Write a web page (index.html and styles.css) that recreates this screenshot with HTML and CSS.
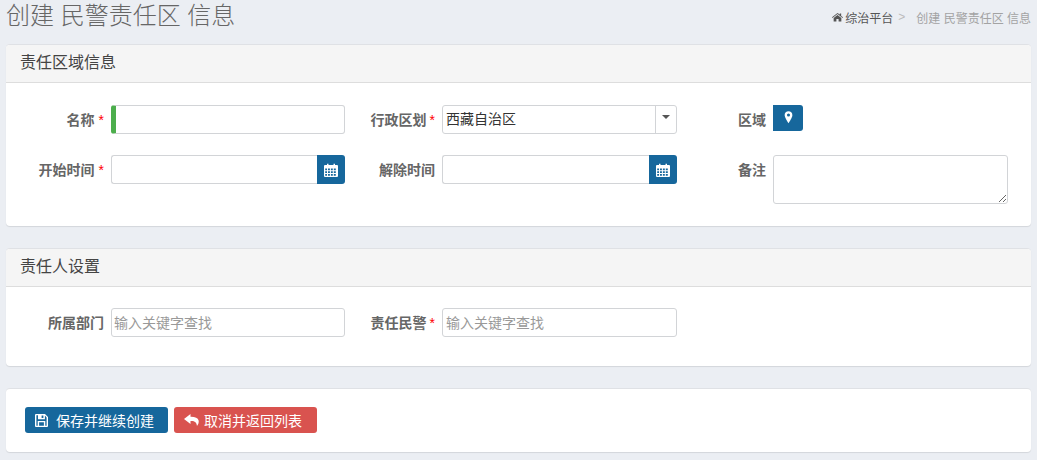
FILE: index.html
```html
<!DOCTYPE html>
<html lang="zh-CN">
<head>
<meta charset="utf-8">
<title>创建 民警责任区 信息</title>
<link rel="stylesheet" href="styles.css">
</head>
<body>
<div class="page">
  <header class="page-head">
    <h1 class="page-title">创建 民警责任区 信息</h1>
    <nav class="crumbs">
      <svg class="crumb-home" viewBox="0 0 12 10"><path d="M6 .6 0 5.400l.5.7L6 1.800l5.500 4.300.5-.7-2-1.600V1.200H8.500v1.200zM1.800 6v4h3V7.200h2.400V10h3V6L6 2.800z"/></svg>
      <a class="crumb-link">综治平台</a>
      <span class="crumb-sep">&gt;</span>
      <span class="crumb-current">创建 民警责任区 信息</span>
    </nav>
  </header>

  <section class="panel panel-area">
    <div class="panel-head">责任区域信息</div>
    <div class="form-grid">
      <label class="field-label">名称<span class="req">*</span></label>
      <input class="input input-valid" type="text">
      <label class="field-label field-label-mid">行政区划<span class="req req-tight">*</span></label>
      <div class="select">
        <span class="select-value">西藏自治区</span>
        <span class="select-arrow"><i class="caret"></i></span>
      </div>
      <label class="field-label">区域</label>
      <div class="map-cell">
        <button class="btn-map" type="button">
          <svg class="icon-pin" viewBox="0 0 10 14"><path fill-rule="evenodd" d="M5 0a4.300 4.300 0 0 0-4.300 4.400C.7 6.800 3.600 11 5 13.500c1.400-2.500 4.300-6.700 4.300-9.100A4.300 4.300 0 0 0 5 0zm0 6a1.700 1.700 0 1 1 0-3.400A1.700 1.700 0 0 1 5 6z"/></svg>
        </button>
      </div>

      <label class="field-label">开始时间<span class="req">*</span></label>
      <div class="date">
        <input class="input date-input" type="text">
        <span class="date-btn"><svg class="icon-cal" viewBox="0 0 14 14"><path fill-rule="evenodd" d="M1 2h2V.8h1.500V2h5V.8H11V2h2a1 1 0 0 1 1 1v10a1 1 0 0 1-1 1H1a1 1 0 0 1-1-1V3a1 1 0 0 1 1-1zm.2 3.500v1.700H3V5.500zm2.800 0v1.700h1.900V5.500zm2.900 0v1.700h1.900V5.500zm2.900 0v1.700h2V5.500zM1.200 8.200V10H3V8.200zm2.800 0V10h1.900V8.200zm2.900 0V10h1.900V8.200zm2.900 0V10h2V8.200zM1.200 11v1.800H3V11zM4 11v1.800h1.900V11zm2.900 0v1.800h1.900V11zm2.900 0v1.800h2V11z"/></svg></span>
      </div>
      <label class="field-label">解除时间</label>
      <div class="date">
        <input class="input date-input" type="text">
        <span class="date-btn"><svg class="icon-cal" viewBox="0 0 14 14"><path fill-rule="evenodd" d="M1 2h2V.8h1.500V2h5V.8H11V2h2a1 1 0 0 1 1 1v10a1 1 0 0 1-1 1H1a1 1 0 0 1-1-1V3a1 1 0 0 1 1-1zm.2 3.500v1.700H3V5.500zm2.800 0v1.700h1.900V5.500zm2.900 0v1.700h1.900V5.500zm2.900 0v1.700h2V5.500zM1.200 8.200V10H3V8.200zm2.800 0V10h1.900V8.200zm2.900 0V10h1.900V8.200zm2.900 0V10h2V8.200zM1.200 11v1.800H3V11zM4 11v1.800h1.900V11zm2.900 0v1.800h1.900V11zm2.900 0v1.800h2V11z"/></svg></span>
      </div>
      <label class="field-label">备注</label>
      <textarea class="textarea"></textarea>
    </div>
  </section>

  <section class="panel panel-owner">
    <div class="panel-head">责任人设置</div>
    <div class="form-grid form-grid-owner">
      <label class="field-label">所属部门</label>
      <input class="input" type="text" placeholder="输入关键字查找">
      <label class="field-label field-label-mid">责任民警<span class="req req-tight">*</span></label>
      <input class="input input-wide-pad" type="text" placeholder="输入关键字查找">
    </div>
  </section>

  <section class="panel panel-actions">
    <button class="btn btn-save" type="button">
      <svg class="icon-btn" viewBox="0 0 13 13"><path fill-rule="evenodd" d="M1 0h9l3 3v9a1 1 0 0 1-1 1H1a1 1 0 0 1-1-1V1a1 1 0 0 1 1-1zm.4 1.300v10.400h1.300V7h7.600v4.700h1.300V3.600L9.900 1.500v3.700H3V1.300zM4.100 8.200v3.500h4.800V8.200zM6.600 1.500v2.600h1.800V1.500z"/></svg>
      保存并继续创建
    </button>
    <button class="btn btn-cancel" type="button">
      <svg class="icon-btn icon-reply" viewBox="0 0 15 14"><path d="M6.500 1 0 6l6.500 5V8c4-.3 6 1 6.500 5 1.500-2 2-3.800 1.600-5.500C14 5 11 3.700 6.500 3.800z"/></svg>
      取消并返回列表
    </button>
  </section>
</div>
</body>
</html>
```
FILE: styles.css
```css
* { box-sizing: border-box; }
html, body { margin: 0; padding: 0; }
body {
  background: #ebeef3;
  font-family: "Liberation Sans", "Noto Sans CJK SC", sans-serif;
  font-size: 14px;
  color: #333;
  height: 460px;
  overflow: hidden;
}
.page { padding: 0 6px; }
.page-head {
  display: flex;
  justify-content: space-between;
  align-items: flex-start;
  height: 44px;
}
.page-title {
  margin: 0;
  padding-top: 1px;
  font-size: 24px;
  font-weight: 300;
  line-height: 30px;
  color: #666;
}
.crumbs {
  display: flex;
  align-items: center;
  height: 34px;
  font-size: 12px;
  color: #333;
}
.crumb-home { width: 11px; height: 10px; fill: #555; margin-right: 2px; }
.crumb-link { color: #555; }
.crumb-sep { color: #bbb; margin: 0 11px 0 5px; }
.crumb-current { color: #a3a3a3; }
.panel {
  background: #fff;
  border-radius: 4px;
  box-shadow: 0 1px 1px rgba(0,0,0,.1);
  border-top: 1px solid #dfe1e5;
}
.panel-area { height: 182px; margin-bottom: 22px; }
.panel-owner { height: 118px; margin-bottom: 22px; }
.panel-actions {
  height: 64px;
  display: flex;
  gap: 6px;
  padding: 18px 19px;
}
.panel-head {
  height: 38px;
  padding: 0 15px 0 14px;
  line-height: 36px;
  font-size: 16px;
  color: #444;
  background: #f5f5f5;
  border-bottom: 1px solid #ddd;
  border-radius: 4px 4px 0 0;
}
.form-grid {
  display: grid;
  grid-template-columns: 105px 234px 97px 235px 96px 235px;
  grid-template-rows: 29px 49px;
  row-gap: 21px;
  padding-top: 22px;
}
.form-grid-owner { grid-template-rows: 29px; padding-top: 21px; }
.field-label {
  justify-self: end;
  padding: 5px 7px 0 0;
  font-size: 14px;
  line-height: 20px;
  font-weight: 700;
  color: #666;
}
.req { color: #f00; font-weight: 400; margin-left: 4px; }
.req-tight { margin-left: 3px; }
.input, .textarea, .select {
  display: block;
  width: 100%;
  height: 29px;
  margin: 0;
  padding: 0 2px;
  background: #fff;
  border: 1px solid #d2d4d7;
  border-radius: 3px;
  font: inherit;
  color: #333;
  outline: none;
}
.input::placeholder { color: #999; opacity: 1; }
.input-valid { border-left: 5px solid #4cae4c; }
.input-wide-pad { padding-left: 3px; }
.textarea { height: 49px; resize: both; }
.select { display: flex; justify-content: space-between; align-items: center; padding: 0 3px; }
.select-value { line-height: 27px; }
.select-arrow {
  display: flex;
  align-items: center;
  justify-content: center;
  width: 21px;
  height: 27px;
  margin-right: -3px;
  border-left: 1px solid #d2d4d7;
}
.caret {
  display: block;
  margin-bottom: 6px;
  border-left: 4px solid transparent;
  border-right: 4px solid transparent;
  border-top: 4px solid #555;
}
.date { display: flex; height: 29px; }
.date-input { flex: 1; min-width: 0; border-radius: 3px 0 0 3px; border-right: 0; }
.date-btn {
  display: flex;
  align-items: center;
  justify-content: center;
  flex: none;
  width: 28px;
  background: #16679c;
  border-radius: 0 3px 3px 0;
}
.icon-cal { width: 14px; height: 14px; fill: #fff; }
.map-cell { display: flex; align-items: flex-start; }
.btn-map {
  display: flex;
  align-items: center;
  justify-content: center;
  width: 30px;
  height: 26px;
  padding: 0 0 2px 1px;
  background: #16679c;
  border: 0;
  border-radius: 0 3px 3px 0;
}
.icon-pin { width: 9px; height: 13px; fill: #fff; }
.btn {
  display: flex;
  align-items: center;
  width: 143px;
  height: 26px;
  padding: 0 0 0 10px;
  border: 0;
  border-radius: 3px;
  color: #fff;
  font: inherit;
}
.btn-save { background: #16679c; }
.btn-cancel { background: #d9534f; }
.icon-btn { width: 13px; height: 13px; fill: #fff; margin-right: 8px; }
.icon-reply { width: 15px; height: 14px; margin-right: 5px; }
```
